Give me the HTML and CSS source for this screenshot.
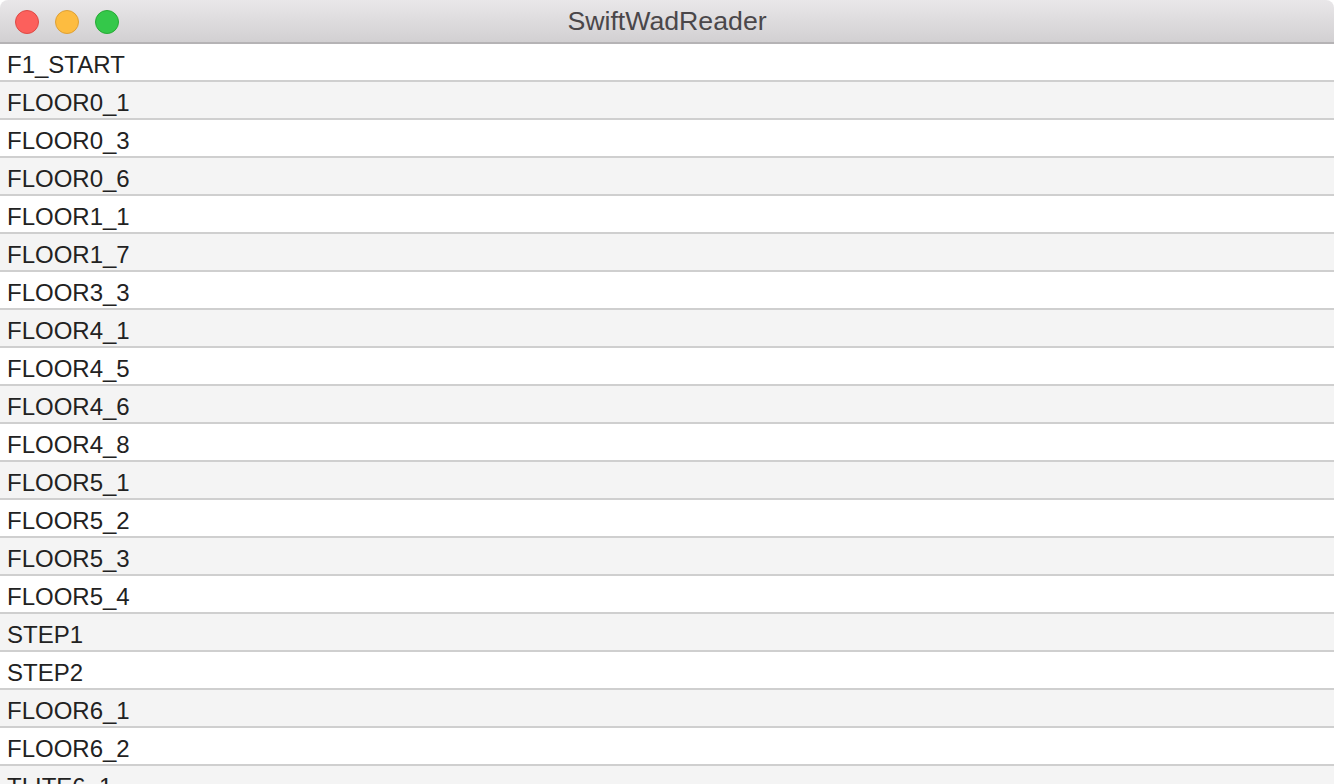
FILE: index.html
```html
<!DOCTYPE html>
<html>
<head>
<meta charset="utf-8">
<link rel="stylesheet" href="styles.css">
</head>
<body>
<div class="window">
  <div class="titlebar">
    <div class="lights">
      <span class="light red"></span>
      <span class="light yellow"></span>
      <span class="light green"></span>
    </div>
    <div class="title">SwiftWadReader</div>
  </div>
  <div class="list">
    <div class="row">F1_START</div>
    <div class="row">FLOOR0_1</div>
    <div class="row">FLOOR0_3</div>
    <div class="row">FLOOR0_6</div>
    <div class="row">FLOOR1_1</div>
    <div class="row">FLOOR1_7</div>
    <div class="row">FLOOR3_3</div>
    <div class="row">FLOOR4_1</div>
    <div class="row">FLOOR4_5</div>
    <div class="row">FLOOR4_6</div>
    <div class="row">FLOOR4_8</div>
    <div class="row">FLOOR5_1</div>
    <div class="row">FLOOR5_2</div>
    <div class="row">FLOOR5_3</div>
    <div class="row">FLOOR5_4</div>
    <div class="row">STEP1</div>
    <div class="row">STEP2</div>
    <div class="row">FLOOR6_1</div>
    <div class="row">FLOOR6_2</div>
    <div class="row">TLITE6_1</div>
  </div>
</div>
</body>
</html>
```

FILE: styles.css
```css
html, body {
  margin: 0;
  padding: 0;
  background: #ffffff;
  overflow: hidden;
}
.window {
  width: 1334px;
  height: 784px;
  overflow: hidden;
  border-radius: 8px 8px 0 0;
  font-family: "Liberation Sans", Arial, sans-serif;
}
.titlebar {
  position: relative;
  height: 42px;
  background: linear-gradient(#e9e7e9, #d2d0d2);
  border-bottom: 2px solid #b5b3b5;
  display: flex;
  align-items: center;
  justify-content: center;
}
.lights {
  position: absolute;
  left: 15px;
  top: 10px;
  display: flex;
  gap: 16px;
}
.light {
  width: 24px;
  height: 24px;
  border-radius: 50%;
  box-sizing: border-box;
}
.red { background: #fc605c; border: 1px solid #de4a45; }
.yellow { background: #fdbc40; border: 1px solid #dea035; }
.green { background: #34c84a; border: 1px solid #27aa35; }
.title {
  font-size: 26.7px;
  color: #4a474a;
  margin-top: 1px;
}
.row {
  height: 31px;
  padding-top: 5px;
  padding-left: 7px;
  border-bottom: 2px solid #cfcfcf;
  display: flex;
  align-items: center;
  font-size: 24px;
  line-height: 31px;
  color: #222222;
  background: #ffffff;
}
.row:nth-child(even) {
  background: #f4f4f4;
}
```
